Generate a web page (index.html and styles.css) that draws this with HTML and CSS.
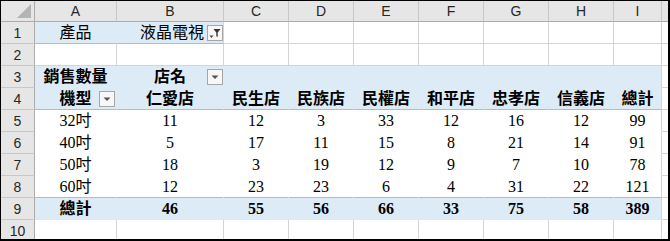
FILE: index.html
```html
<!DOCTYPE html>
<html lang="zh-Hant">
<head>
<meta charset="utf-8">
<title>樞紐分析表</title>
<link rel="stylesheet" href="styles.css">
</head>
<body>
<div class="sheet">
  <!-- header row -->
  <div class="corner"><span class="tri"></span></div>
  <div class="h">A</div><div class="h">B</div><div class="h">C</div><div class="h">D</div><div class="h">E</div><div class="h">F</div><div class="h">G</div><div class="h">H</div><div class="h">I</div><div class="h hend"></div>

  <!-- row 1 -->
  <div class="n">1</div>
  <div class="c pb bl nor">產品</div>
  <div class="c pb bl right">液晶電視<span class="btn"><svg width="14" height="14" viewBox="0 0 14 14"><path d="M1.5 9.5h4l-2 2.5z" fill="#444"/><path d="M5.5 3h7l-2.8 3.6V11l-1.4-0.8V6.6z" fill="#333"/></svg></span></div>
  <div class="c"></div><div class="c"></div><div class="c"></div><div class="c"></div><div class="c"></div><div class="c"></div><div class="c"></div><div class="c end"></div>

  <!-- row 2 -->
  <div class="n">2</div>
  <div class="c"></div><div class="c"></div><div class="c"></div><div class="c"></div><div class="c"></div><div class="c"></div><div class="c"></div><div class="c"></div><div class="c"></div><div class="c end"></div>

  <!-- row 3 -->
  <div class="n">3</div>
  <div class="c pb nob nor b">銷售數量</div>
  <div class="c pb nob nor b">店名<span class="btn"><svg width="14" height="14" viewBox="0 0 14 14"><path d="M3.5 5.5h7l-3.5 3.5z" fill="#555"/></svg></span></div>
  <div class="c pb nob nor"></div><div class="c pb nob nor"></div><div class="c pb nob nor"></div><div class="c pb nob nor"></div><div class="c pb nob nor"></div><div class="c pb nob nor"></div><div class="c pb nob"></div>
  <div class="c end"></div>

  <!-- row 4 -->
  <div class="n">4</div>
  <div class="c pb bl nor b">機型<span class="btn btn-a"><svg width="14" height="14" viewBox="0 0 14 14"><path d="M3.5 5.5h7l-3.5 3.5z" fill="#555"/></svg></span></div>
  <div class="c pb bl nor b">仁愛店</div>
  <div class="c pb bl nor b">民生店</div>
  <div class="c pb bl nor b">民族店</div>
  <div class="c pb bl nor b">民權店</div>
  <div class="c pb bl nor b">和平店</div>
  <div class="c pb bl nor b">忠孝店</div>
  <div class="c pb bl nor b">信義店</div>
  <div class="c pb bl b">總計</div>
  <div class="c end"></div>

  <!-- row 5 -->
  <div class="n">5</div>
  <div class="c nob nor">32吋</div><div class="c nob nor">11</div><div class="c nob nor">12</div><div class="c nob nor">3</div><div class="c nob nor">33</div><div class="c nob nor">12</div><div class="c nob nor">16</div><div class="c nob nor">12</div><div class="c nob">99</div>
  <div class="c end"></div>

  <!-- row 6 -->
  <div class="n">6</div>
  <div class="c nob nor">40吋</div><div class="c nob nor">5</div><div class="c nob nor">17</div><div class="c nob nor">11</div><div class="c nob nor">15</div><div class="c nob nor">8</div><div class="c nob nor">21</div><div class="c nob nor">14</div><div class="c nob">91</div>
  <div class="c end"></div>

  <!-- row 7 -->
  <div class="n">7</div>
  <div class="c nob nor">50吋</div><div class="c nob nor">18</div><div class="c nob nor">3</div><div class="c nob nor">19</div><div class="c nob nor">12</div><div class="c nob nor">9</div><div class="c nob nor">7</div><div class="c nob nor">10</div><div class="c nob">78</div>
  <div class="c end"></div>

  <!-- row 8 -->
  <div class="n">8</div>
  <div class="c bl nor">60吋</div><div class="c bl nor">12</div><div class="c bl nor">23</div><div class="c bl nor">23</div><div class="c bl nor">6</div><div class="c bl nor">4</div><div class="c bl nor">31</div><div class="c bl nor">22</div><div class="c bl">121</div>
  <div class="c end"></div>

  <!-- row 9 -->
  <div class="n">9</div>
  <div class="c pb nob nor b">總計</div><div class="c pb nob nor b">46</div><div class="c pb nob nor b">55</div><div class="c pb nob nor b">56</div><div class="c pb nob nor b">66</div><div class="c pb nob nor b">33</div><div class="c pb nob nor b">75</div><div class="c pb nob nor b">58</div><div class="c pb nob b">389</div>
  <div class="c end"></div>

  <!-- row 10 -->
  <div class="n">10</div>
  <div class="c"></div><div class="c"></div><div class="c"></div><div class="c"></div><div class="c"></div><div class="c"></div><div class="c"></div><div class="c"></div><div class="c"></div><div class="c end"></div>
</div>
</body>
</html>
```
FILE: styles.css
```css
html, body {
  margin: 0;
  padding: 0;
  background: #ffffff;
}

.sheet {
  width: 670px;
  height: 241px;
  box-sizing: border-box;
  border-top: 1px solid #000;
  border-left: 1px solid #000;
  border-right: 2px solid #000;
  border-bottom: 2px solid #000;
  overflow: hidden;
  display: grid;
  grid-template-columns: 34px 82px 107px repeat(6, 65px) 48px 1fr;
  grid-template-rows: 21px repeat(10, 22px);
  font-family: "Liberation Serif", "Noto Sans CJK TC", serif;
  font-size: 16px;
  color: #000;
}

.corner {
  background: #e6e6e6;
  border-right: 1px solid #ababab;
  border-bottom: 1px solid #ababab;
  position: relative;
}

.tri {
  position: absolute;
  right: 3px;
  bottom: 3px;
  width: 14px;
  height: 14px;
  background: #b4b4b4;
  clip-path: polygon(100% 0, 100% 100%, 0 100%);
}

.h {
  background: #e6e6e6;
  border-right: 1px solid #c8c8c8;
  border-bottom: 1px solid #ababab;
  display: flex;
  align-items: center;
  justify-content: center;
  font-family: "Liberation Sans", "Noto Sans", sans-serif;
  font-size: 14px;
  color: #262626;
  box-sizing: border-box;
}

.hend {
  border-right: none;
}

.n {
  background: #e6e6e6;
  border-right: 1px solid #ababab;
  border-bottom: 1px solid #c8c8c8;
  display: flex;
  align-items: center;
  justify-content: center;
  font-family: "Liberation Sans", "Noto Sans", sans-serif;
  font-size: 14px;
  color: #262626;
  box-sizing: border-box;
}

.c {
  position: relative;
  box-sizing: border-box;
  border-right: 1px solid #d4d4d4;
  border-bottom: 1px solid #d4d4d4;
  display: flex;
  align-items: center;
  justify-content: center;
  white-space: nowrap;
  line-height: 20px;
}

.end {
  border-right: none;
}

.pb {
  background: #ddebf7;
}

.bl {
  border-bottom-color: #9bc2e6;
}

.nob {
  border-bottom-color: transparent;
}

.nor {
  border-right-color: transparent;
}

.b {
  font-weight: bold;
}

.right {
  justify-content: flex-end;
  padding-right: 19px;
}

.btn {
  position: absolute;
  right: 0;
  top: 3px;
  width: 16px;
  height: 16px;
  box-sizing: border-box;
  border: 1px solid #a6a6a6;
  background: #f7f7f7;
  display: flex;
  align-items: center;
  justify-content: center;
}

.btn-a {
  right: 1px;
}
```
